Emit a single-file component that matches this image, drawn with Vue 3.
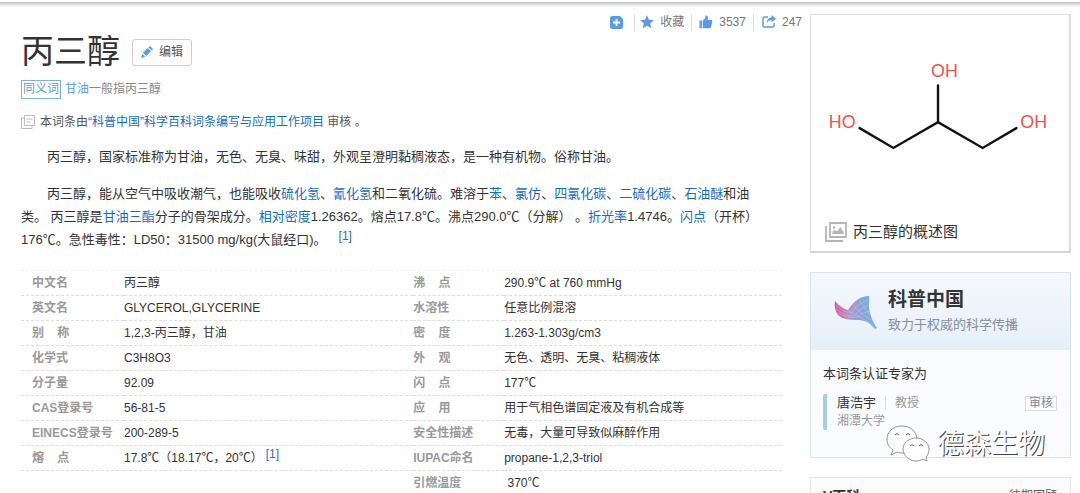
<script setup>
const rows = [
  ['中文名', '丙三醇', '沸    点', '290.9℃ at 760 mmHg'],
  ['英文名', 'GLYCEROL,GLYCERINE', '水溶性', '任意比例混溶'],
  ['别    称', '1,2,3-丙三醇，甘油', '密    度', '1.263-1.303g/cm3'],
  ['化学式', 'C3H8O3', '外    观', '无色、透明、无臭、粘稠液体'],
  ['分子量', '92.09', '闪    点', '177℃'],
  ['CAS登录号', '56-81-5', '应    用', '用于气相色谱固定液及有机合成等'],
  ['EINECS登录号', '200-289-5', '安全性描述', '无毒，大量可导致似麻醉作用'],
  ['熔    点', '17.8℃（18.17℃，20℃）', 'IUPAC命名', 'propane-1,2,3-triol', true],
  ['', '', '引燃温度', ' 370℃'],
]
</script>

<template>
  <div class="page">
    <div class="topline"></div>
    <div class="layout">
      <main class="main">
        <div class="tools">
          <button class="tool" aria-label="添加">
            <svg width="13" height="13" viewBox="0 0 13 13"><path d="M2.500 0H10l3 3v7.500a2.500 2.500 0 0 1-2.500 2.500h-8A2.500 2.500 0 0 1 0 10.500v-8A2.500 2.500 0 0 1 2.500 0z" fill="#5a9be6" /><path d="M6.500 3v7M3 6.500h7" stroke="#fff" stroke-width="1.800" /></svg>
          </button>
          <button class="tool">
            <svg width="14" height="14" viewBox="0 0 14 14"><path d="M7 .3l2 4.400 4.800.5-3.600 3.200 1.100 4.900L7 10.800l-4.300 2.500 1.100-4.900L.2 5.200 5 4.700z" fill="#5a9be6" /></svg>
            收藏
          </button>
          <button class="tool like">
            <svg width="14" height="14" viewBox="0 0 14 14"><path d="M.5 5.500h2.300v7.800H.5zM3.700 5.500C6 4.500 6.300 3 6.500.8 7.800.1 9.200 1 9 3l-.4 2H12c1 0 1.500.6 1.300 1.500l-1.200 5.600c-.2.800-.7 1.200-1.500 1.200H3.700z" fill="#5a9be6" /></svg>
            3537
          </button>
          <button class="tool">
            <svg width="14" height="14" viewBox="0 0 14 14"><path d="M6 2H2.500C1.500 2 1 2.500 1 3.500v7c0 1 .5 1.500 1.500 1.500h8c1 0 1.500-.5 1.500-1.500V8" fill="none" stroke="#5a9be6" stroke-width="1.500" /><path d="M9.500 0L14 3.700 9.500 7.300V5C7.500 5 6 6 4.500 8.500 4.800 5 6.500 2.600 9.500 2.300z" fill="#5a9be6" /></svg>
            247
          </button>
        </div>

        <div class="content">
          <header class="heading">
            <h1>丙三醇</h1>
            <button class="edit">
              <svg width="12" height="12" viewBox="0 0 12 12"><path d="M8.200.4a1 1 0 0 1 1.300 0l2 2a1 1 0 0 1 0 1.300l-.8.8L7.400 1.200zM6.700 2L10 5.300 5.200 10 1.900 6.700zM1.200 7.800l3 3L0 12z" fill="#5a9be6" /></svg>
              编辑
            </button>
          </header>

          <div class="synonym">
            <a class="tag" href="#">同义词</a>
            <span><a class="soft" href="#">甘油</a>一般指丙三醇</span>
          </div>

          <div class="review">
            <svg width="14" height="14" viewBox="0 0 14 14" fill="none" stroke="#bbb"><path d="M3.500.5h10v10h-10zM3.500 3H.5v10.500h10.500v-3M5.500 4h6M5.500 7h4" /></svg>
            <span>本词条由<a href="#">“科普中国”科学百科词条编写与应用工作项目</a> 审核 。</span>
          </div>

          <div class="summary">
            <p>丙三醇，国家标准称为甘油，无色、无臭、味甜，外观呈澄明黏稠液态，是一种有机物。俗称甘油。</p>
            <p>丙三醇，能从空气中吸收潮气，也能吸收<a href="#">硫化氢</a>、<a href="#">氰化氢</a>和二氧化硫。难溶于<a href="#">苯</a>、<a href="#">氯仿</a>、<a href="#">四氯化碳</a>、<a href="#">二硫化碳</a>、<a href="#">石油醚</a>和油类。 丙三醇是<a href="#">甘油三酯</a>分子的骨架成分。<a href="#">相对密度</a>1.26362。熔点17.8℃。沸点290.0℃（分解）&nbsp;。<a href="#">折光率</a>1.4746。<a href="#">闪点</a>（开杯）176℃。急性毒性：LD50：31500 mg/kg(大鼠经口)。<sup><a href="#">[1]</a></sup></p>
          </div>

          <table class="info">
            <tbody>
              <tr v-for="r in rows" :key="r[2]">
                <th scope="row">{{ r[0] }}</th>
                <td>{{ r[1] }}<sup v-if="r[4]"><a href="#">[1]</a></sup></td>
                <th scope="row">{{ r[2] }}</th>
                <td>{{ r[3] }}</td>
              </tr>
            </tbody>
          </table>
        </div>
      </main>

      <aside class="side">
        <figure class="picture">
          <svg class="molecule" viewBox="0 0 260 202" role="img" aria-label="丙三醇结构式">
            <path d="M49 114l34 20 45-26 45 26 34-20M128 108V71" fill="none" stroke="#111" stroke-width="2.400" stroke-linecap="round" />
            <g fill="#f0524f" font-size="18"><text x="121" y="62">OH</text><text x="18" y="114">HO</text><text x="211" y="114">OH</text></g>
          </svg>
          <figcaption>
            <svg width="22" height="20" viewBox="0 0 22 20"><path d="M5 1h16v14H5z" fill="none" stroke="#b5b5b5" stroke-width="1.800" /><path d="M1 4v15h17" fill="none" stroke="#b5b5b5" stroke-width="1.800" /><path d="M7.500 12V9.500L10 8l2 1.500L15.500 5l3 5v2z" fill="#b5b5b5" /><circle cx="9" cy="5.500" r="1.300" fill="#b5b5b5" /></svg>
            丙三醇的概述图
          </figcaption>
        </figure>

        <section class="expert">
          <header class="brand">
            <svg width="44" height="36" viewBox="0 0 44 36">
              <defs>
                <linearGradient id="wing" x1="0" y1="0" x2="1" y2="0"><stop offset="0" stop-color="#d8589f" /><stop offset=".35" stop-color="#b493c8" /><stop offset=".65" stop-color="#86a5d6" /><stop offset="1" stop-color="#6fb8dd" /></linearGradient>
              </defs>
              <path d="M2 7c4 5 9 8 13 9C20 8 27 2 36 2c1 2 0 6 0 11 1 9 4 15 8 21-1 1-2 1-3 0-5-6-10-8-17-8-8 0-15-1-19-5C2 17 1 11 2 7z" fill="url(#wing)" />
              <path d="M3 11c5 5 9 7 15 8 4-6 10-11 18-13M3 15c6 5 11 7 18 7 4-5 9-9 15-11M5 19c7 4 13 5 20 4 4-3 7-5 12-6M15 16c7 5 17 9 26 17M20 11c6 6 12 11 18 15M26 6c3 5 7 10 11 15" fill="none" stroke="#fff" stroke-opacity=".3" stroke-width=".7" />
            </svg>
            <div>
              <h2>科普中国</h2>
              <p>致力于权威的科学传播</p>
            </div>
          </header>
          <div class="certified">
            <h3>本词条认证专家为</h3>
            <div class="person">
              <div class="who">
                <div class="name"><a href="#">唐浩宇</a><span class="rank">教授</span></div>
                <div class="school">湘潭大学</div>
              </div>
              <span class="badge">审核</span>
            </div>
          </div>
        </section>

        <section class="vpedia">
          <h3>V百科</h3>
          <a href="#">往期回顾</a>
        </section>
      </aside>
    </div>

    <div class="watermark">
      <svg width="44" height="38" viewBox="0 0 44 38" fill="#fff" stroke="#777" stroke-width=".8">
        <path d="M16 1C7 1 1 7 1 14c0 5 2 8 6 11l-2 5 6-3c2 1 5 1 8 1 7-1 12-6 12-13C31 7 25 1 16 1z" />
        <path d="M30 13c-7 0-13 5-13 11s6 12 13 12c3 0 5-1 7-2l4 2-1-4c2-2 3-5 3-8 0-6-6-11-13-11z" />
        <path d="M9 10q2-3 4 0M20 10q2-3 4 0M24 21q2-3 4 0M33 21q2-3 4 0" fill="none" stroke="#333" />
      </svg>
      德森生物
    </div>
  </div>
</template>

<style>
body { margin: 0; background: #fff; }
</style>

<style scoped>
.page {
  position: relative;
  height: 100vh;
  overflow: hidden;
  font: 12px/20px "Liberation Sans", "Noto Sans CJK SC", sans-serif;
  color: #333;
  background: #fff;
}
h1, h2, h3, p, figure { margin: 0; }
a { color: #136ec2; text-decoration: none; }
button { font: inherit; cursor: pointer; }
svg { flex: none; }
.topline { height: 5px; margin-top: 2px; background: linear-gradient(#c4c4c4, #e0e0e0 50%, #fff); }
.layout { display: flex; gap: 8px; padding: 0 9px 0 21px; }
.main { flex: 1; min-width: 0; padding-top: 6px; }
.tools { display: flex; justify-content: flex-end; align-items: center; height: 18px; }
.tool {
  display: flex;
  align-items: center;
  gap: 6px;
  height: 17px;
  padding: 0 7px 0 5px;
  border: 0;
  border-left: 1px solid #ddd;
  background: none;
  color: #777;
}
.tool:first-child { border-left: 0; padding-right: 11px; }
.tool:last-child { padding: 0 0 0 8px; }
.like { padding-left: 7px; }
.content { padding-right: 20px; }
.heading { display: flex; align-items: center; gap: 12px; height: 42px; }
h1 { font-size: 33px; line-height: 42px; font-weight: 400; }
.edit {
  display: flex;
  align-items: center;
  gap: 6px;
  height: 27px;
  padding: 0 8px;
  border: 1px solid #ccc;
  border-radius: 3px;
  background: #fff;
  color: #555;
}
.synonym { display: flex; align-items: center; gap: 4px; margin-top: 6px; color: #888; }
.tag { padding: 0 1px; border: 1px solid #7fb0ec; line-height: 17px; color: #5a9be6; }
.soft { color: #5a9be6; }
.review { display: flex; align-items: center; gap: 5px; margin-top: 13px; color: #555; }
.summary { margin-top: 13px; padding-right: 21px; font-size: 13px; line-height: 23px; }
.summary p { text-indent: 2em; }
.summary p + p { margin-top: 14px; }
sup { margin-left: 12px; font-size: 12px; line-height: 0; vertical-align: 4px; }
sup a { color: #36c; }
.info { width: 100%; margin-top: 19px; border-collapse: collapse; table-layout: fixed; }
.info tr { border-bottom: 1px dashed #ddd; }
.info tr:first-child { border-top: 1px dashed #f0f0f0; }
.info th, .info td { height: 24px; padding: 0; text-align: left; white-space: pre; line-height: 20px; }
.info th { width: 91px; padding-left: 11px; box-sizing: border-box; color: #999; }
.info th:first-child { width: 103px; }
.info td:nth-child(2) { width: 38%; }
.info th:nth-child(3) { padding-left: 0; }
.info sup { margin-left: 3px; }
.side { flex: none; width: 261px; margin-top: 7px; }
.picture { border: 1px solid #ddd; border-right: 2px solid #ddd; border-bottom: 2px solid #d5d5d5; box-sizing: border-box; }
.molecule { display: block; width: 100%; }
.molecule text { font-family: "Liberation Sans", sans-serif; }
figcaption { display: flex; align-items: center; gap: 6px; padding: 5px 14px 7px; font-size: 15px; line-height: 24px; }
.expert { margin-top: 19px; border: 1px solid #d6e3f0; background: #fafcff; }
.brand { display: flex; align-items: center; gap: 11px; height: 77px; padding: 0 22px; background: linear-gradient(#f5f9fe, #e6eff8); }
h2 { font-size: 19px; line-height: 26px; }
.brand p { font-size: 13px; line-height: 24px; color: #848e9c; }
.certified { padding: 14px 13px 27px 12px; }
h3 { font-size: 13px; line-height: 20px; font-weight: 400; }
.person { display: flex; align-items: flex-start; justify-content: space-between; margin-top: 10px; }
.who { padding: 0 0 0 10px; border-left: 4px solid #a4cdf5; border-radius: 2px; line-height: 18px; }
.name a { color: #333; font-size: 13px; }
.rank { margin-left: 9px; padding-left: 9px; border-left: 1px solid #ddd; line-height: 12px; color: #999; }
.school { color: #999; }
.badge { margin-top: 2px; padding: 0 3px; border: 1px solid #ddd; line-height: 13px; color: #888; }
.vpedia { display: flex; justify-content: space-between; margin-top: 19px; padding: 8px 13px 12px 12px; border: 1px solid #e4e4e4; background: #fbfbfb; }
.vpedia h3 { font-size: 14px; font-weight: 700; }
.vpedia a { color: #555; }
.watermark {
  position: absolute;
  right: 35px;
  bottom: 30px;
  display: flex;
  align-items: center;
  gap: 7px;
  font-size: 27px;
  line-height: 38px;
  color: #fff;
  text-shadow: 1px 1px 0 #444;
}
</style>
